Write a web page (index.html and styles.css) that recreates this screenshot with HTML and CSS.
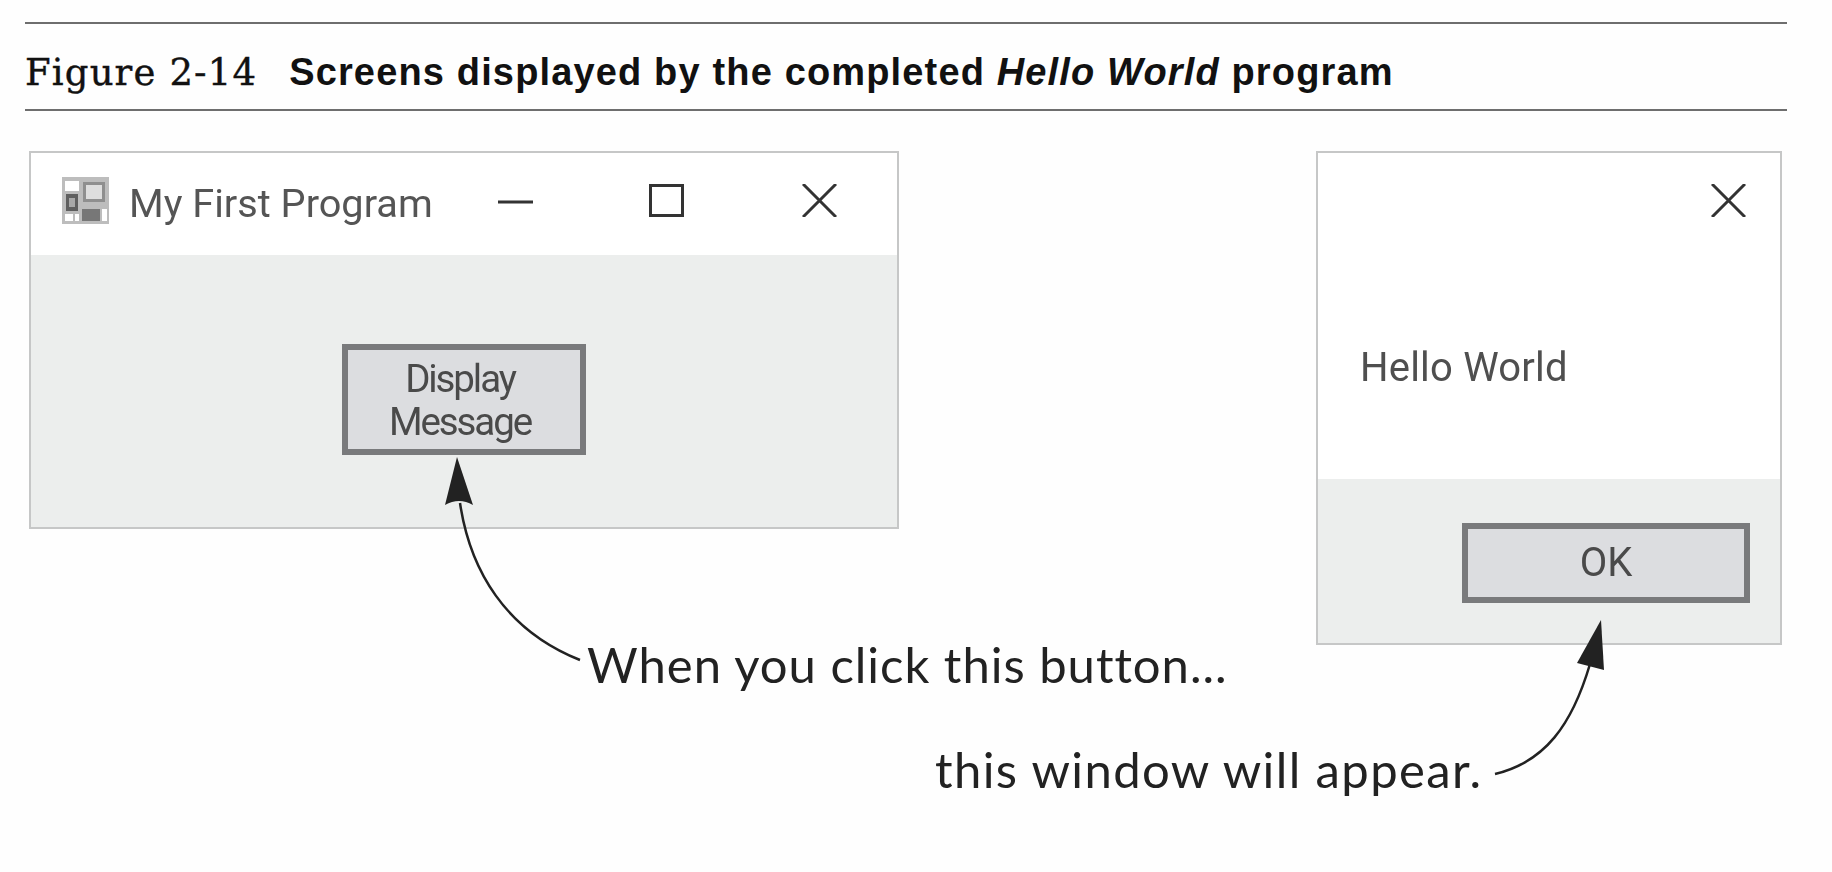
FILE: index.html
```html
<!DOCTYPE html>
<html lang="en">
<head>
<meta charset="utf-8">
<title>Figure 2-14</title>
<link rel="stylesheet" href="styles.css">
</head>
<body>
<main class="figure">
  <header class="caption">
    <span class="fig-no">Figure 2-14</span>
    <h1 class="fig-title">Screens displayed by the completed <em>Hello World</em> program</h1>
  </header>
  <section class="stage">
    <div class="window main-window">
      <div class="titlebar">
        <svg class="app-icon" viewBox="0 0 47 47" aria-hidden="true">
          <rect width="47" height="47" fill="#bdbdbd"/>
          <rect x="3" y="4" width="14" height="10" fill="#fff"/>
          <rect x="21" y="5" width="22" height="20" fill="#8f8f8f"/>
          <rect x="24" y="8" width="16" height="14" fill="#dedede"/>
          <rect x="4" y="17" width="12" height="17" fill="#5f5f5f"/>
          <rect x="7" y="21" width="6" height="9" fill="#a8a8a8"/>
          <rect x="3" y="37" width="8" height="7" fill="#fff"/>
          <rect x="13" y="37" width="4" height="7" fill="#fff"/>
          <rect x="20" y="32" width="18" height="12" fill="#777"/>
          <rect x="40" y="32" width="5" height="12" fill="#fff"/>
        </svg>
        <span class="win-title">My First Program</span>
        <svg class="ctl ctl-min" viewBox="0 0 35 33" aria-hidden="true"><path d="M0 18h35"/></svg>
        <svg class="ctl ctl-max" viewBox="0 0 35 33" aria-hidden="true"><rect x="1.5" y="1.5" width="32" height="30"/></svg>
        <svg class="ctl ctl-close" viewBox="0 0 35 33" aria-hidden="true"><path d="M1 0l33 33M34 0L1 33"/></svg>
      </div>
      <div class="win-body">
        <div class="btn btn-display">Display<br>Message</div>
      </div>
    </div>
    <div class="window msg-window">
      <div class="titlebar msg-bar">
        <svg class="ctl" viewBox="0 0 35 33" aria-hidden="true"><path d="M1 0l33 33M34 0L1 33"/></svg>
      </div>
      <p class="message">Hello World</p>
      <div class="msg-footer">
        <div class="btn btn-ok">OK</div>
      </div>
    </div>
  </section>
  <svg class="arrows" viewBox="0 0 1832 872" aria-hidden="true">
    <path class="curve" d="M460 503C470 570 505 630 580 660"/>
    <path class="head" d="M457 457L445 505Q459 497 473 505Z"/>
    <path class="curve" d="M1590 664C1572 725 1545 762 1495 774"/>
    <path class="head" d="M1601 620L1577 663L1604 670Z"/>
  </svg>
  <p class="callout callout-click">When you click this button...</p>
  <p class="callout callout-appear">this window will appear.</p>
</main>
</body>
</html>
```
FILE: styles.css
```css
* { box-sizing: border-box; }
html, body { margin: 0; height: 100%; background: #fefefe; }
body { overflow: hidden; }

.figure {
  position: relative;
  width: 1832px;
  height: 872px;
  padding: 22px 45px 0 25px;
}

.caption {
  display: flex;
  align-items: baseline;
  gap: 32px;
  height: 89px;
  padding-top: 24px;
  border-top: 2px solid #6e6e6e;
  border-bottom: 2px solid #6e6e6e;
  color: #111;
}
.fig-no {
  font-family: "DejaVu Serif", serif;
  font-size: 37px;
  line-height: 48px;
  letter-spacing: 1.15px;
  -webkit-text-stroke: 0.4px #111;
}
.fig-title {
  margin: 0;
  font-family: "Liberation Sans", Arial, sans-serif;
  font-size: 38px;
  line-height: 48px;
  font-weight: 700;
  letter-spacing: 1.15px;
}

.stage {
  display: flex;
  justify-content: space-between;
  align-items: flex-start;
  margin-top: 40px;
  padding: 0 5px 0 4px;
}

.window {
  display: flex;
  flex-direction: column;
  border: 2px solid #c6c7c7;
  background: #fff;
  color: #4f4f4f;
  font-family: "Roboto", "Open Sans", sans-serif;
  filter: blur(0.6px);
}
.main-window { width: 870px; height: 378px; }
.msg-window { width: 466px; height: 494px; }

.titlebar {
  display: flex;
  align-items: center;
  height: 102px;
  padding-left: 31px;
  padding-bottom: 8px;
}
.msg-bar { justify-content: flex-end; padding-right: 34px; }

.app-icon { width: 47px; height: 47px; flex: none; }
.win-title {
  margin-left: 20px;
  margin-top: 8px;
  width: 369px;
  font-size: 39.7px;
  line-height: 46px;
  color: #555;
}

.ctl {
  width: 35px;
  height: 33px;
  flex: none;
  fill: none;
  stroke: #333;
  stroke-width: 3;
}
.ctl-max { margin-left: 116px; }
.ctl-close { margin-left: 118px; }

.win-body {
  flex: 1;
  background: #eceeed;
  padding: 89px 0 0 311px;
}
.btn {
  display: flex;
  align-items: center;
  justify-content: center;
  border: 6px solid #797a7c;
  background: #dcdde0;
  text-align: center;
  color: #4a4a4a;
}
.btn-display {
  width: 244px;
  height: 111px;
  padding-right: 8px;
  font-size: 38.5px;
  line-height: 43px;
  letter-spacing: -2.1px;
}

.message {
  margin: 0;
  height: 224px;
  padding: 90px 0 0 42px;
  font-size: 40px;
  line-height: 46px;
  letter-spacing: 0.2px;
}
.msg-footer {
  flex: 1;
  display: flex;
  justify-content: flex-end;
  align-items: flex-start;
  padding: 44px 30px 0 0;
  background: #eceeed;
}
.btn-ok { width: 288px; height: 80px; font-size: 40px; line-height: 46px; }

.arrows {
  position: absolute;
  left: 0;
  top: 0;
  width: 1832px;
  height: 872px;
  pointer-events: none;
}
.curve { fill: none; stroke: #222; stroke-width: 2.5; }
.head { fill: #222; }

.callout {
  position: absolute;
  margin: 0;
  font-family: "Lato", sans-serif;
  font-size: 49px;
  line-height: 54px;
  color: #222;
  white-space: nowrap;
}
.callout-click { left: 587px; top: 637px; letter-spacing: 0.98px; }
.callout-appear { left: 935px; top: 742px; letter-spacing: 1.4px; }
```
